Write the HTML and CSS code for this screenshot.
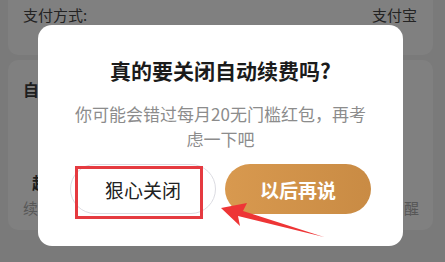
FILE: index.html
```html
<!DOCTYPE html>
<html lang="zh">
<head>
<meta charset="utf-8">
<link rel="stylesheet" href="styles.css">
</head>
<body>
<div class="page">
  <div class="card card-top">
    <div class="row">
      <span>支付方式:</span>
      <span>支付宝</span>
    </div>
  </div>
  <div class="card card-main">
    <div class="label">自</div>
    <div class="label label-sub">超</div>
    <div class="row row-muted">
      <span>续</span>
      <span>醒</span>
    </div>
  </div>
</div>

<div class="modal">
  <h1 class="title">真的要关闭自动续费吗?</h1>
  <p class="desc">你可能会错过每月20无门槛红包，再考虑一下吧</p>
  <div class="actions">
    <button class="btn btn-ghost">狠心关闭</button>
    <button class="btn btn-gold">以后再说</button>
  </div>
</div>

<div class="highlight"></div>
<svg class="arrow" width="120" height="50" viewBox="0 0 120 50">
  <polygon points="1,8 27,3 23,11 104,37 18,16 20,26" fill="#ee3536"/>
</svg>
</body>
</html>
```

FILE: styles.css
```css
html, body {
  margin: 0;
  padding: 0;
}
body {
  width: 445px;
  height: 262px;
  background: #7a7a7a;
  overflow: hidden;
  position: relative;
  font-family: "Noto Sans CJK SC", "Noto Sans", sans-serif;
}
.page {
  padding: 0 12px 0 8px;
}
.card {
  background: #808080;
  border-radius: 10px;
}
.card-top {
  height: 55px;
  border-top-left-radius: 0;
  border-top-right-radius: 0;
  box-sizing: border-box;
  padding: 4px 16px 0 15px;
}
.row {
  display: flex;
  justify-content: space-between;
  font-size: 15px;
  line-height: 22px;
  color: #232323;
}
.card-main {
  margin-top: 5px;
  height: 170px;
  box-sizing: border-box;
  padding: 18px 14px 0 15px;
}
.label {
  font-size: 16px;
  line-height: 22px;
  font-weight: 700;
  color: #1e1e1e;
}
.label-sub {
  margin-top: 71px;
  padding-left: 9px;
}
.row-muted {
  margin-top: 4px;
  font-size: 15px;
  color: #575757;
}

.modal {
  position: absolute;
  left: 38px;
  top: 25px;
  width: 365px;
  height: 221px;
  box-sizing: border-box;
  background: #fff;
  border-radius: 14px;
  padding: 31px 32px 0;
  text-align: center;
}
.title {
  margin: 0;
  font-size: 21px;
  line-height: 28px;
  font-weight: 700;
  color: #1b1b1b;
}
.desc {
  margin: 17px 0 0;
  font-size: 17px;
  line-height: 25px;
  color: #8c8c8c;
}
.actions {
  margin-top: 13px;
  display: flex;
  justify-content: center;
  gap: 9px;
}
.btn {
  width: 149px;
  height: 50px;
  border-radius: 25px;
  font-family: inherit;
  font-size: 19px;
  padding: 0;
  box-sizing: border-box;
}
.btn-ghost {
  background: #fff;
  border: 1px solid #dcdce2;
  color: #222;
}
.btn-gold {
  border: none;
  color: #fff;
  font-weight: 700;
  background: linear-gradient(90deg, #d8994f, #c98b44);
}
.highlight {
  position: absolute;
  left: 75px;
  top: 166px;
  width: 128px;
  height: 53px;
  box-sizing: border-box;
  border: 3px solid #e53a40;
}
.arrow {
  position: absolute;
  left: 220px;
  top: 200px;
}
```
